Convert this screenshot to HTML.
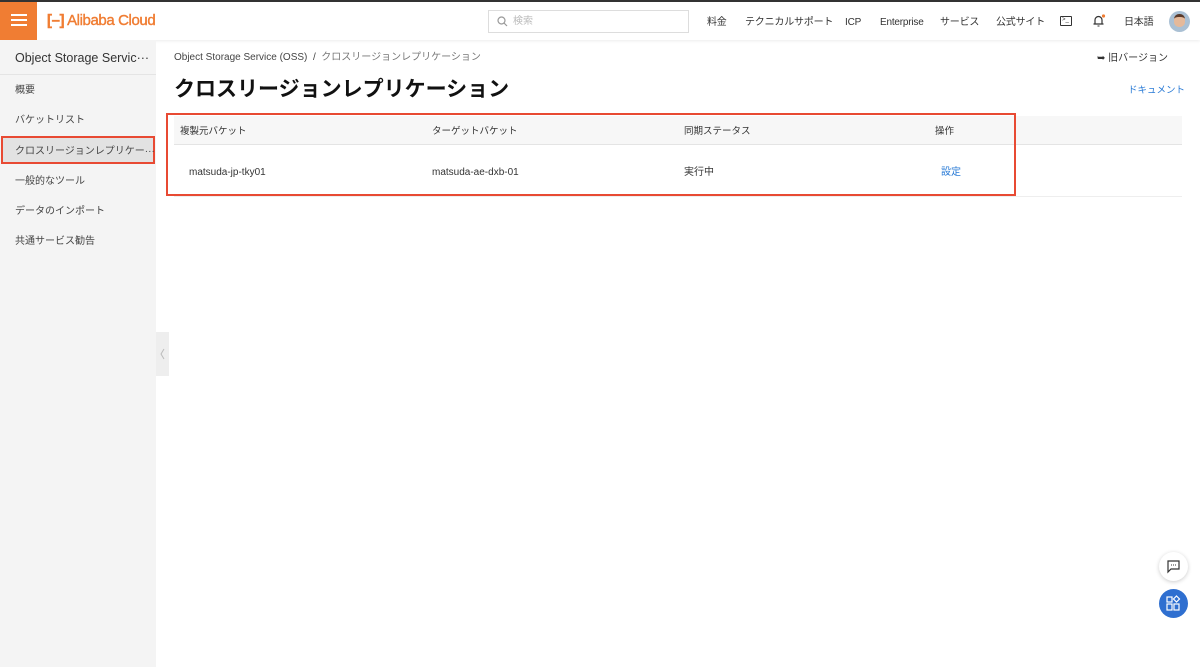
<!DOCTYPE html>
<html><head><meta charset="utf-8"><style>
*{margin:0;padding:0;box-sizing:border-box}
body{width:1200px;height:667px;overflow:hidden;background:#fff;font-family:"Liberation Sans","Noto Sans CJK JP",sans-serif;color:#333;position:relative}
div{line-height:12px}
.top{position:absolute;left:0;top:0;width:1200px;height:40px;background:#fff;border-top:2px solid #333;box-shadow:0 1px 3px rgba(0,0,0,.08)}
.ham{position:absolute;left:0;top:0;width:37px;height:38px;background:#f07d33}
.ham i{position:absolute;left:11px;width:16px;height:2px;background:#fff}
.logo{position:absolute;left:47px;top:11px;color:#f07d33;font-size:15px;line-height:16px;letter-spacing:-0.4px;-webkit-text-stroke:0.4px #f07d33}
.search{position:absolute;left:488px;top:8px;width:201px;height:23px;border:1px solid #ddd;font-size:10px;color:#bbb;padding:5px 0 0 24px}
.nav{position:absolute;top:15px;font-size:10px;color:#333;letter-spacing:-0.2px}
.side{position:absolute;left:0;top:40px;width:156px;height:627px;background:#f4f4f4}
.side .h{height:35px;border-bottom:1px solid #e4e4e4;font-size:12.5px;line-height:14px;padding:11px 0 0 15px;color:#333}
.side .it{position:absolute;left:15px;font-size:10px;color:#444}
.sel{position:absolute;left:1px;top:96px;width:154px;height:28px;background:#e2e2e2;border:2px solid #e84a33}
.tab{position:absolute;left:156px;top:332px;width:13px;height:44px;background:#eee}
.red{position:absolute;left:166px;top:113px;width:850px;height:83px;border:2px solid #e84a33}
.th{position:absolute;top:126px;font-size:9.5px;color:#333}
.td{position:absolute;top:167px;font-size:10px;color:#333}
</style></head><body>
<div class="top">
<div class="ham"><i style="top:12px"></i><i style="top:17px"></i><i style="top:22px"></i></div>
<div class="logo"><b>[–]</b> Alibaba Cloud</div>
<div class="search"><svg style="position:absolute;left:8px;top:5px" width="11" height="11" viewBox="0 0 11 11"><circle cx="4.5" cy="4.5" r="3.5" fill="none" stroke="#999" stroke-width="1.2"/><path d="M7 7l3 3" stroke="#999" stroke-width="1.2"/></svg>検索</div>
<div class="nav" style="left:707px">料金</div>
<div class="nav" style="left:745px">テクニカルサポート</div>
<div class="nav" style="left:845px">ICP</div>
<div class="nav" style="left:880px">Enterprise</div>
<div class="nav" style="left:940px">サービス</div>
<div class="nav" style="left:996px">公式サイト</div>
<div style="position:absolute;left:1060px;top:14px;width:12px;height:10px;border:1.3px solid #333;border-radius:1px;font-size:6px;line-height:7px;padding-left:1px">&gt;_</div>
<svg style="position:absolute;left:1092px;top:12px" width="14" height="14" viewBox="0 0 14 14"><path d="M3 10V6a3.5 3.5 0 017 0v4h1.5H1.5z" fill="none" stroke="#333" stroke-width="1.2"/><path d="M5.5 12h2" stroke="#333"/><circle cx="11.5" cy="2" r="1.6" fill="#f07d33"/></svg>
<div class="nav" style="left:1124px">日本語</div>
<div style="position:absolute;left:1169px;top:9px;width:21px;height:21px;border-radius:50%;background:#aac0d4;overflow:hidden"><div style="position:absolute;left:5px;top:3px;width:11px;height:13px;border-radius:5px;background:#e5b99a;border-top:3px solid #5a3a2a"></div></div>
</div>
<div class="side">
<div class="h">Object Storage Servic···</div>
<div class="it" style="top:45px">概要</div>
<div class="it" style="top:75px">バケットリスト</div>
<div class="sel"></div>
<div class="it" style="top:106px">クロスリージョンレプリケー···</div>
<div class="it" style="top:136px">一般的なツール</div>
<div class="it" style="top:166px">データのインポート</div>
<div class="it" style="top:196px">共通サービス勧告</div>
</div>
<div class="tab"><svg width="13" height="44"><path d="M8 17l-3 5 3 5" fill="none" stroke="#bbb" stroke-width="1"/></svg></div>
<div style="position:absolute;left:174px;top:52px;font-size:10px;color:#444">Object Storage Service (OSS) &nbsp;/&nbsp; <span style="color:#777">クロスリージョンレプリケーション</span></div>
<div style="position:absolute;left:174px;top:78px;font-size:21px;line-height:24px;font-weight:bold;color:#111">クロスリージョンレプリケーション</div>
<div style="position:absolute;left:1097px;top:53px;font-size:10px;color:#333">➥ 旧バージョン</div>
<div style="position:absolute;left:1128px;top:85px;font-size:9.5px;color:#2a7bd6">ドキュメント</div>
<div style="position:absolute;left:174px;top:116px;width:1008px;height:29px;background:#f7f7f7;border-bottom:1px solid #e4e4e4"></div>
<div style="position:absolute;left:174px;top:196px;width:1008px;height:1px;background:#eee"></div>
<div class="red"></div>
<div class="th" style="left:180px">複製元バケット</div>
<div class="th" style="left:432px">ターゲットバケット</div>
<div class="th" style="left:684px">同期ステータス</div>
<div class="th" style="left:935px">操作</div>
<div class="td" style="left:189px">matsuda-jp-tky01</div>
<div class="td" style="left:432px">matsuda-ae-dxb-01</div>
<div class="td" style="left:684px">実行中</div>
<div class="td" style="left:941px;color:#2a7bd6">設定</div>
<div style="position:absolute;left:1159px;top:552px;width:29px;height:29px;border-radius:50%;background:#fff;box-shadow:0 1px 4px rgba(0,0,0,.2)"><svg width="29" height="29"><path d="M9 9h11v8h-8l-3 3z" fill="none" stroke="#333" stroke-width="1.2"/><path d="M12 13h1M14 13h1M16 13h1" stroke="#333"/></svg></div>
<div style="position:absolute;left:1159px;top:589px;width:29px;height:29px;border-radius:50%;background:#2f6fd0"><svg width="29" height="29"><g fill="none" stroke="#fff" stroke-width="1.2"><rect x="8" y="8" width="5" height="5"/><rect x="8" y="15" width="5" height="6"/><rect x="15" y="15" width="5" height="6"/><path d="M17.5 7l3 3-3 3-3-3z"/></g></svg></div>
</body></html>
